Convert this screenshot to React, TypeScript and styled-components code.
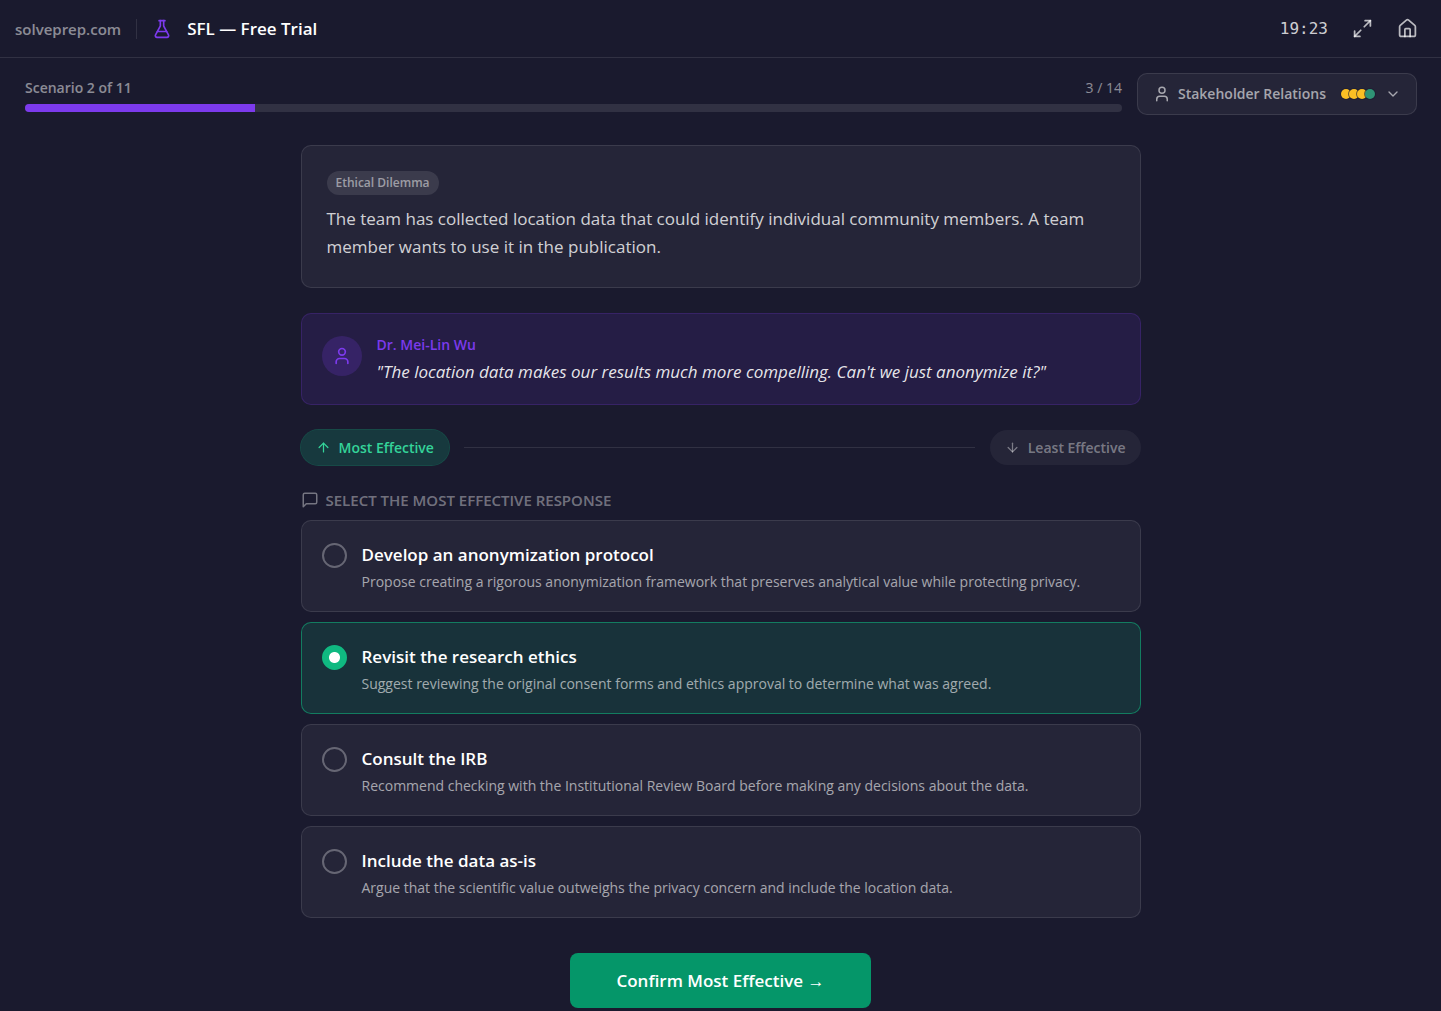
import React, { useState } from "react";
import styled, { createGlobalStyle } from "styled-components";
import { ArrowDown, ArrowUp, ChevronDown, FlaskConical, House, Maximize2, User } from "lucide-react";

const GlobalStyle = createGlobalStyle`
  *, *::before, *::after { box-sizing: border-box; }
  body {
    margin: 0;
    background: #1a1a2e;
    color: #ffffff;
    font-family: "Segoe UI", "Open Sans", "Noto Sans", sans-serif;
    font-size: 14px;
    line-height: 20px;
  }
  button { font-family: inherit; cursor: pointer; }
  h1, h2, p { margin: 0; }
`;

const Page = styled.div`
  min-height: 100vh;
  display: flex;
  flex-direction: column;
`;

const TopBar = styled.header`
  display: flex;
  align-items: center;
  justify-content: space-between;
  height: 58px;
  padding: 0 15px;
  border-bottom: 1px solid rgba(255, 255, 255, 0.1);
`;

const Brand = styled.div`
  display: flex;
  align-items: center;
  gap: 15px;
`;

const SiteLink = styled.a`
  color: rgba(255, 255, 255, 0.5);
  font-size: 15px;
  font-weight: 600;
  text-decoration: none;
`;

const Divider = styled.span`
  width: 1px;
  height: 20px;
  background: rgba(255, 255, 255, 0.1);
`;

const Title = styled.h1`
  font-size: 17px;
  line-height: 24px;
  font-weight: 600;
`;

const Tools = styled.div`
  display: flex;
  align-items: center;
  gap: 8px;
`;

const Clock = styled.time`
  margin-right: 8px;
  color: rgba(255, 255, 255, 0.8);
  font-family: Consolas, "DejaVu Sans Mono", monospace;
  font-size: 16px;
`;

const IconButton = styled.button`
  display: grid;
  place-items: center;
  width: 37px;
  height: 37px;
  padding: 0;
  border: 0;
  border-radius: 8px;
  background: none;
  color: rgba(255, 255, 255, 0.7);
`;

const StatusRow = styled.section`
  display: flex;
  align-items: flex-start;
  gap: 15px;
  padding: 15px 24px 15px 25px;
`;

const Progress = styled.div`
  flex: 1;
  padding-top: 5px;
`;

const ProgressText = styled.div`
  display: flex;
  justify-content: space-between;
  margin-bottom: 6px;
  color: rgba(255, 255, 255, 0.5);
`;

const ScenarioLabel = styled.span`
  font-weight: 600;
`;

const Track = styled.div`
  height: 8px;
  overflow: hidden;
  border-radius: 4px;
  background: rgba(255, 255, 255, 0.1);
`;

const Fill = styled.div`
  height: 100%;
  background: #7c3aed;
`;

const TopicButton = styled.button`
  display: flex;
  align-items: center;
  width: 280px;
  height: 42px;
  padding: 0 15px;
  border: 1px solid rgba(255, 255, 255, 0.1);
  border-radius: 10px;
  background: rgba(255, 255, 255, 0.05);
  color: rgba(255, 255, 255, 0.6);
  font-size: 14px;
  font-weight: 600;
  line-height: 20px;
`;

const TopicName = styled.span`
  margin-left: 7px;
`;

const Dots = styled.span`
  display: flex;
  margin-left: auto;
  margin-right: 10px;
`;

const Dot = styled.span<{ $color: string }>`
  width: 10px;
  height: 10px;
  border-radius: 50%;
  background: ${(p) => p.$color};
  box-shadow: 0 0 0 1px rgba(26, 26, 46, 0.6);
  & + & { margin-left: -2px; }
`;

const Content = styled.main`
  display: flex;
  flex-direction: column;
  width: 100%;
  max-width: 840px;
  margin: 15px auto 0;
`;

const Prompt = styled.section`
  padding: 25px 25px 26px;
  border: 1px solid rgba(255, 255, 255, 0.1);
  border-radius: 10px;
  background: rgba(255, 255, 255, 0.05);
`;

const Tag = styled.span`
  display: block;
  width: fit-content;
  margin-bottom: 10px;
  padding: 2px 9px;
  border-radius: 12px;
  background: rgba(255, 255, 255, 0.1);
  color: rgba(255, 255, 255, 0.5);
  font-size: 12px;
  font-weight: 600;
`;

const PromptText = styled.p`
  color: rgba(255, 255, 255, 0.8);
  font-size: 17px;
  line-height: 28px;
`;

const Quote = styled.section`
  display: flex;
  gap: 15px;
  margin-top: 25px;
  padding: 20px;
  border: 1px solid rgba(124, 58, 237, 0.2);
  border-radius: 10px;
  background: rgba(124, 58, 237, 0.12);
`;

const Avatar = styled.div`
  display: grid;
  flex: none;
  place-items: center;
  width: 40px;
  height: 40px;
  margin-top: 2px;
  border-radius: 50%;
  background: rgba(124, 58, 237, 0.2);
  color: #7c3aed;
`;

const Speaker = styled.h2`
  margin-bottom: 4px;
  color: #7c3aed;
  font-size: 14px;
  font-weight: 600;
  line-height: 22px;
`;

const Speech = styled.p`
  color: rgba(255, 255, 255, 0.9);
  font-size: 17px;
  font-style: italic;
  line-height: 24px;
`;

const Steps = styled.div`
  display: flex;
  align-items: center;
  gap: 15px;
  margin-top: 25px;
`;

const Step = styled.button<{ $active?: boolean }>`
  display: flex;
  align-items: center;
  gap: 8px;
  height: 35px;
  padding: 0 15px;
  border: 0;
  border-radius: 18px;
  background: ${(p) => (p.$active ? "rgba(16, 185, 129, 0.2)" : "rgba(255, 255, 255, 0.05)")};
  box-shadow: ${(p) => (p.$active ? "0 0 0 1px rgba(16, 185, 129, 0.3)" : "none")};
  color: ${(p) => (p.$active ? "#34d399" : "rgba(255, 255, 255, 0.4)")};
  font-size: 14px;
  font-weight: 600;
`;

const StepLine = styled.span`
  flex: 1;
  height: 1px;
  background: rgba(255, 255, 255, 0.1);
`;

const Choices = styled.fieldset`
  display: flex;
  flex-direction: column;
  gap: 10px;
  min-width: 0;
  margin: 25px 0 0;
  padding: 0;
  border: 0;
`;

const Legend = styled.legend`
  display: flex;
  align-items: center;
  gap: 7px;
  margin-bottom: 10px;
  padding: 0;
  color: rgba(255, 255, 255, 0.4);
  font-size: 15px;
  font-weight: 600;
  text-transform: uppercase;
`;

const Choice = styled.label<{ $selected: boolean }>`
  display: flex;
  gap: 15px;
  padding: 20px 20px 19px;
  border: 1px solid ${(p) => (p.$selected ? "rgba(16, 185, 129, 0.55)" : "rgba(255, 255, 255, 0.1)")};
  border-radius: 10px;
  background: ${(p) => (p.$selected ? "rgba(16, 185, 129, 0.15)" : "rgba(255, 255, 255, 0.05)")};
  cursor: pointer;
`;

const Radio = styled.input`
  flex: none;
  appearance: none;
  width: 25px;
  height: 25px;
  margin: 2px 0 0;
  border: 2px solid rgba(255, 255, 255, 0.3);
  border-radius: 50%;
  &:checked {
    border-color: #10b981;
    background: radial-gradient(circle, #ffffff 5px, #10b981 6px);
  }
`;

const ChoiceText = styled.span`
  display: grid;
  gap: 3px;
`;

const ChoiceTitle = styled.span`
  font-size: 17px;
  font-weight: 600;
  line-height: 28px;
`;

const ChoiceNote = styled.span`
  color: rgba(255, 255, 255, 0.6);
  font-size: 14px;
  line-height: 20px;
`;

const Confirm = styled.button`
  align-self: center;
  height: 55px;
  margin-top: 35px;
  padding: 0 46px;
  border: 0;
  border-radius: 8px;
  background: #059669;
  color: #ffffff;
  font-size: 17px;
  font-weight: 600;
`;

const MessageIcon = () => (
  <svg width="18" height="18" viewBox="0 0 24 24" fill="none" stroke="currentColor" strokeWidth="2" strokeLinecap="round" strokeLinejoin="round" aria-hidden="true">
    <path d="M21 15a2 2 0 0 1-2 2H7l-4 4V5a2 2 0 0 1 2-2h14a2 2 0 0 1 2 2z" />
  </svg>
);

const choices = [
  {
    title: "Develop an anonymization protocol",
    note: "Propose creating a rigorous anonymization framework that preserves analytical value while protecting privacy.",
  },
  {
    title: "Revisit the research ethics",
    note: "Suggest reviewing the original consent forms and ethics approval to determine what was agreed.",
  },
  {
    title: "Consult the IRB",
    note: "Recommend checking with the Institutional Review Board before making any decisions about the data.",
  },
  {
    title: "Include the data as-is",
    note: "Argue that the scientific value outweighs the privacy concern and include the location data.",
  },
];

const dotColors = ["#fbbf24", "#fbbf24", "#fbbf24", "#2f9475"];

export default function App() {
  const [selected, setSelected] = useState(1);
  const progress = Math.round((3 / 14) * 100);

  return (
    <Page>
      <GlobalStyle />
      <TopBar>
        <Brand>
          <SiteLink href="#">solveprep.com</SiteLink>
          <Divider />
          <FlaskConical size={20} color="#7c3aed" />
          <Title>SFL — Free Trial</Title>
        </Brand>
        <Tools>
          <Clock>19:23</Clock>
          <IconButton aria-label="Full screen"><Maximize2 size={21} /></IconButton>
          <IconButton aria-label="Home"><House size={21} /></IconButton>
        </Tools>
      </TopBar>

      <StatusRow>
        <Progress>
          <ProgressText>
            <ScenarioLabel>Scenario 2 of 11</ScenarioLabel>
            <span>3 / 14</span>
          </ProgressText>
          <Track>
            <Fill style={{ width: `${progress}%` }} />
          </Track>
        </Progress>
        <TopicButton>
          <User size={18} />
          <TopicName>Stakeholder Relations</TopicName>
          <Dots>
            {dotColors.map((color, i) => <Dot key={i} $color={color} />)}
          </Dots>
          <ChevronDown size={16} />
        </TopicButton>
      </StatusRow>

      <Content>
        <Prompt>
          <Tag>Ethical Dilemma</Tag>
          <PromptText>
            The team has collected location data that could identify individual community members. A team member wants to use it in the publication.
          </PromptText>
        </Prompt>

        <Quote>
          <Avatar><User size={20} /></Avatar>
          <div>
            <Speaker>Dr. Mei-Lin Wu</Speaker>
            <Speech>"The location data makes our results much more compelling. Can't we just anonymize it?"</Speech>
          </div>
        </Quote>

        <Steps>
          <Step $active><ArrowUp size={15} />Most Effective</Step>
          <StepLine />
          <Step><ArrowDown size={15} />Least Effective</Step>
        </Steps>

        <Choices>
          <Legend><MessageIcon />Select the most effective response</Legend>
          {choices.map((choice, i) => (
            <Choice key={choice.title} $selected={i === selected}>
              <Radio type="radio" name="response" checked={i === selected} onChange={() => setSelected(i)} />
              <ChoiceText>
                <ChoiceTitle>{choice.title}</ChoiceTitle>
                <ChoiceNote>{choice.note}</ChoiceNote>
              </ChoiceText>
            </Choice>
          ))}
        </Choices>

        <Confirm>Confirm Most Effective →</Confirm>
      </Content>
    </Page>
  );
}
